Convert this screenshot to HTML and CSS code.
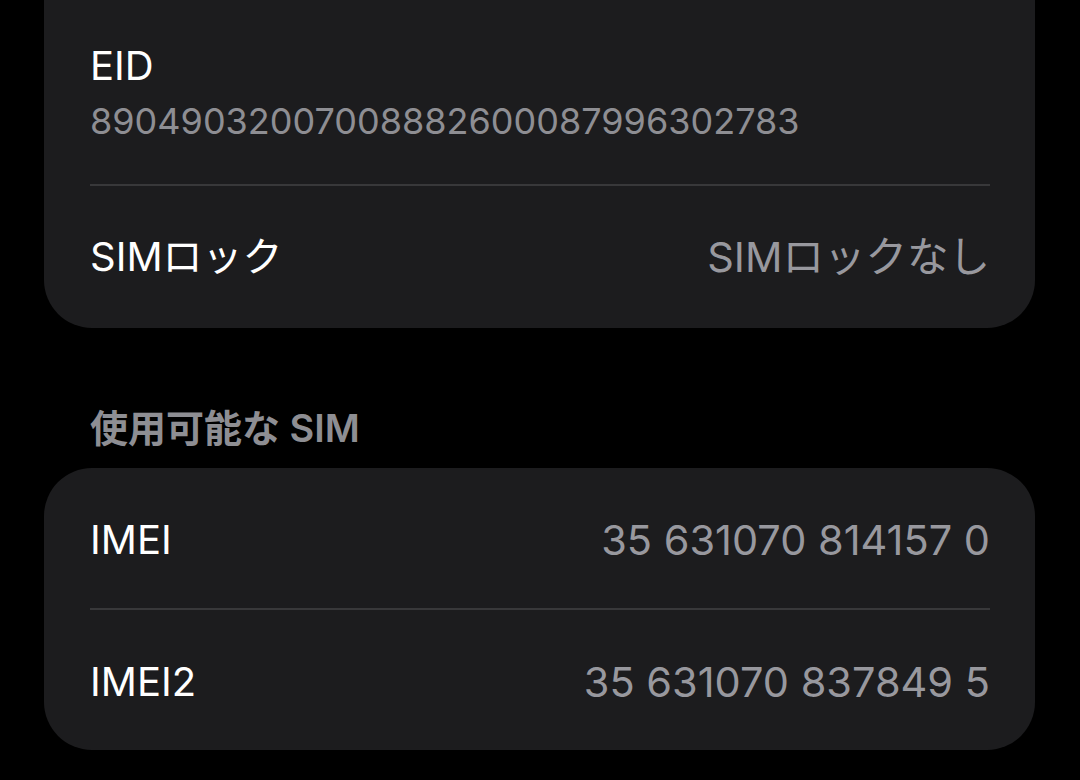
FILE: index.html
```html
<!DOCTYPE html>
<html lang="ja">
<head>
    <meta charset="UTF-8">
    <meta name="viewport" content="width=device-width, initial-scale=1.0">
    <title>情報</title>
    <link rel="stylesheet" href="styles.css">
</head>
<body>
    <div class="screen">
        <div class="card card-top">
            <div class="row row-stack">
                <div class="label">EID</div>
                <div class="sub">89049032007008882600087996302783</div>
            </div>
            <div class="row">
                <span class="label">SIMロック</span>
                <span class="value">SIMロックなし</span>
            </div>
        </div>

        <div class="section-title">使用可能な SIM</div>

        <div class="card card-list">
            <div class="row">
                <span class="label">IMEI</span>
                <span class="value">35 631070 814157 0</span>
            </div>
            <div class="row">
                <span class="label">IMEI2</span>
                <span class="value">35 631070 837849 5</span>
            </div>
        </div>
    </div>
</body>
</html>
```

FILE: styles.css
```css
body {
    margin: 0;
    background-color: #000;
    font-family: Inter, "Noto Sans CJK JP", sans-serif;
    color: #fff;
}

.screen {
    padding: 0 45px 0 44px;
}

.card {
    background-color: #1c1c1e;
    border-radius: 48px;
    padding: 0 45px 0 46px;
}

.card-top {
    border-top-left-radius: 0;
    border-top-right-radius: 0;
}

.row {
    box-sizing: border-box;
    display: flex;
    justify-content: space-between;
    align-items: center;
    height: 140px;
}

.row + .row {
    border-top: 2px solid #38383a;
}

.row-stack {
    flex-direction: column;
    align-items: flex-start;
    justify-content: flex-start;
    height: auto;
    padding: 41px 0 41px;
}

.card-top .row + .row {
    height: 144px;
}

.card-list .row {
    padding-top: 4px;
}

.card-list .row + .row {
    height: 142px;
}

.label {
    font-size: 40px;
    line-height: 50px;
}

.value {
    font-size: 41.5px;
    line-height: 50px;
    color: #98989e;
}

.sub {
    font-size: 36px;
    line-height: 44px;
    color: #8e8e93;
    margin-top: 8px;
}

.section-title {
    font-size: 38px;
    line-height: 44px;
    font-weight: 600;
    color: #8e8e93;
    padding-left: 46px;
    margin: 78px 0 18px;
}
```
